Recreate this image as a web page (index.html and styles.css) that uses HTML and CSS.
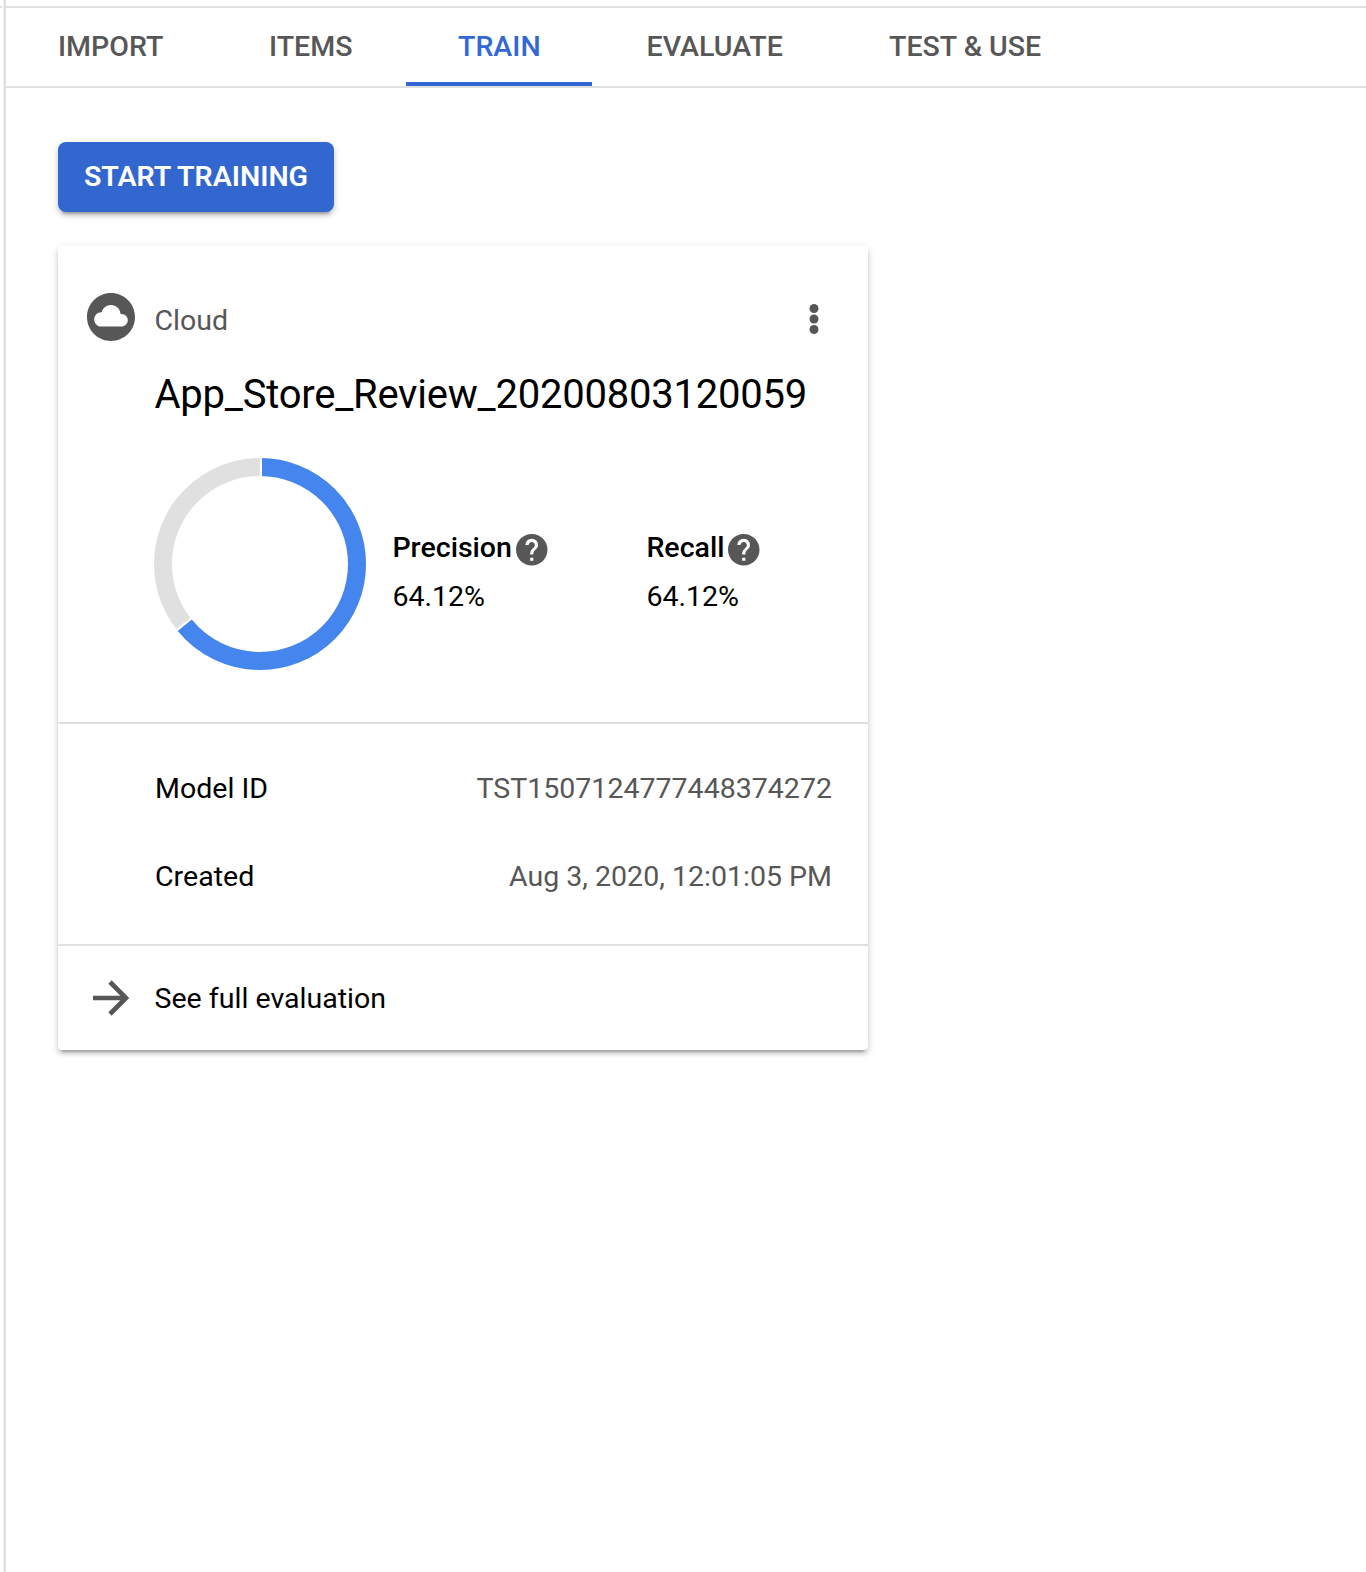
FILE: index.html
```html
<!DOCTYPE html>
<html lang="en">
<head>
<meta charset="utf-8">
<title>Train</title>
<link rel="stylesheet" href="styles.css">
</head>
<body>
<div class="rail"></div>
<main class="main">
  <nav class="tabs">
    <a class="tab tab-import">IMPORT</a>
    <a class="tab tab-items">ITEMS</a>
    <a class="tab tab-train active">TRAIN</a>
    <a class="tab tab-evaluate">EVALUATE</a>
    <a class="tab tab-test">TEST &amp; USE</a>
  </nav>
  <div class="content">
    <button class="start"><span>START TRAINING</span></button>
    <section class="card">
      <div class="summary">
        <header class="head">
          <svg class="cloud" viewBox="2 2 20 20"><path d="M12 2C6.48 2 2 6.48 2 12s4.48 10 10 10 10-4.48 10-10S17.52 2 12 2zm4.2 14H8c-1.66 0-3-1.34-3-3s1.34-3 3-3l.14.01C8.58 8.28 10.13 7 12 7c2.1 0 3.8 1.6 3.98 3.7h.4c1.45 0 2.62 1.17 2.62 2.65S17.75 16 16.2 16z"/></svg>
          <span class="kind">Cloud</span>
          <svg class="more" viewBox="0 0 10 30"><circle cx="5" cy="4.5" r="4.5"/><circle cx="5" cy="15" r="4.5"/><circle cx="5" cy="25.5" r="4.5"/></svg>
        </header>
        <h1 class="title">App_Store_Review_20200803120059</h1>
        <div class="metrics">
          <svg class="donut" viewBox="0 0 212 212">
            <circle class="track" cx="106" cy="106" r="97"/>
            <circle class="value" cx="106" cy="106" r="97" pathLength="100" stroke-dasharray="64.12 100" transform="rotate(-90 106 106)"/>
            <path class="gap" d="M107 0V19M22 172.5L39 159"/>
          </svg>
          <div class="metric precision">
            <div class="label"><span>Precision</span><svg class="help" viewBox="2 2 20 20"><path d="M12 2C6.48 2 2 6.48 2 12s4.48 10 10 10 10-4.48 10-10S17.52 2 12 2zm1 17h-2v-2h2v2zm2.07-7.75l-.9.92C13.45 12.9 13 13.5 13 15h-2v-.5c0-1.1.45-2.1 1.17-2.83l1.24-1.26c.37-.36.59-.86.59-1.41 0-1.1-.9-2-2-2s-2 .9-2 2H8c0-2.21 1.79-4 4-4s4 1.79 4 4c0 .88-.36 1.68-.93 2.25z"/></svg></div>
            <div>64.12%</div>
          </div>
          <div class="metric recall">
            <div class="label"><span>Recall</span><svg class="help" viewBox="2 2 20 20"><path d="M12 2C6.48 2 2 6.48 2 12s4.48 10 10 10 10-4.48 10-10S17.52 2 12 2zm1 17h-2v-2h2v2zm2.07-7.75l-.9.92C13.45 12.9 13 13.5 13 15h-2v-.5c0-1.1.45-2.1 1.17-2.83l1.24-1.26c.37-.36.59-.86.59-1.41 0-1.1-.9-2-2-2s-2 .9-2 2H8c0-2.21 1.79-4 4-4s4 1.79 4 4c0 .88-.36 1.68-.93 2.25z"/></svg></div>
            <div>64.12%</div>
          </div>
        </div>
      </div>
      <div class="details">
        <div class="row"><span>Model ID</span><span class="muted">TST1507124777448374272</span></div>
        <div class="row"><span>Created</span><span class="muted">Aug 3, 2020, 12:01:05 PM</span></div>
      </div>
      <a class="more-link">
        <svg class="arrow" viewBox="0 0 36 36"><path d="M0 18H33M17 2L33 18L17 34"/></svg>
        <span>See full evaluation</span>
      </a>
    </section>
  </div>
</main>
</body>
</html>
```
FILE: styles.css
```css
* { box-sizing: border-box; }
body {
  margin: 0;
  height: 1572px;
  display: flex;
  background: #fff;
  color: #000;
  font: 28.55px/40px Roboto, sans-serif;
  overflow: hidden;
}
svg { display: block; flex: none; }
.rail {
  width: 6px;
  border-right: 2px solid #e0e0e0;
  background: linear-gradient(#e0e0e0, #e0e0e0) 0 6px / 2px 2px no-repeat,
    linear-gradient(#f0f0f0, #f0f0f0) 3px 0 / 1px 100% no-repeat;
}
.main { flex: 1; padding-top: 6px; }
.tabs {
  display: flex;
  height: 82px;
  border-top: 2px solid #e0e0e0;
  border-bottom: 2px solid #e0e0e0;
}
.tab {
  padding: 19px 0 0 52px;
  border-bottom: 4px solid transparent;
  font-weight: 500;
  color: #575757;
  white-space: nowrap;
}
.tab-import { width: 211px; }
.tab-items { width: 189px; }
.tab-train { width: 186px; }
.tab-evaluate { width: 245px; padding-left: 54.5px; }
.tab.active { color: #3367d6; border-bottom-color: #3367d6; }
.content { padding: 54px 52px; }
.start {
  display: block;
  width: 276px;
  height: 70px;
  padding: 0;
  border: 0;
  border-radius: 8px;
  background: #3367d0;
  color: #fff;
  font: 600 28.55px/40px Roboto, sans-serif;
  box-shadow: 0 6px 2px -4px rgba(0,0,0,.2), 0 4px 4px rgba(0,0,0,.14), 0 2px 10px rgba(0,0,0,.12);
}
.card {
  width: 810px;
  height: 804px;
  margin-top: 34px;
  border-radius: 4px;
  background: #fff;
  box-shadow: 0 6px 2px -4px rgba(0,0,0,.2), 0 4px 4px rgba(0,0,0,.14), 0 2px 10px rgba(0,0,0,.12);
}
.summary { height: 478px; padding: 54px 0 0 29px; border-bottom: 2px solid #e0e0e0; }
.head { display: flex; height: 40px; align-items: center; }
.cloud { width: 48px; height: 48px; margin-bottom: 6px; fill: #575757; }
.kind { margin: 2px 0 0 19.5px; color: #575757; }
.more { width: 10px; height: 30px; margin: 0 49px 2px auto; fill: #575757; }
.title { margin: 31px 0 0 67.5px; font-size: 40px; line-height: 48px; font-weight: 400; letter-spacing: -.23px; }
.metrics { display: flex; margin: 39px 0 0 67px; height: 212px; }
.donut { width: 212px; height: 212px; fill: none; }
.track { stroke: #e0e0e0; stroke-width: 18px; }
.value { stroke: #4586ee; stroke-width: 18px; }
.gap { stroke: #fff; stroke-width: 2px; }
.metric { margin-top: 70px; }
.precision { width: 254px; margin-left: 26.4px; }
.label { display: flex; height: 49px; font-weight: 500; }
.help { width: 31.5px; height: 31.5px; margin: 6px 0 0 4.3px; fill: #575757; }
.recall .help { margin-left: 3.6px; }
.details { height: 222px; padding: 45px 36px 0 97px; border-bottom: 2px solid #e0e0e0; }
.row { display: flex; justify-content: space-between; height: 88px; }
.muted { color: #575757; }
.more-link { display: flex; height: 104px; padding-left: 35px; align-items: center; }
.arrow { width: 36px; height: 36px; fill: none; stroke: #575757; stroke-width: 4.7px; }
.more-link span { margin: 2px 0 0 25.5px; }
```
